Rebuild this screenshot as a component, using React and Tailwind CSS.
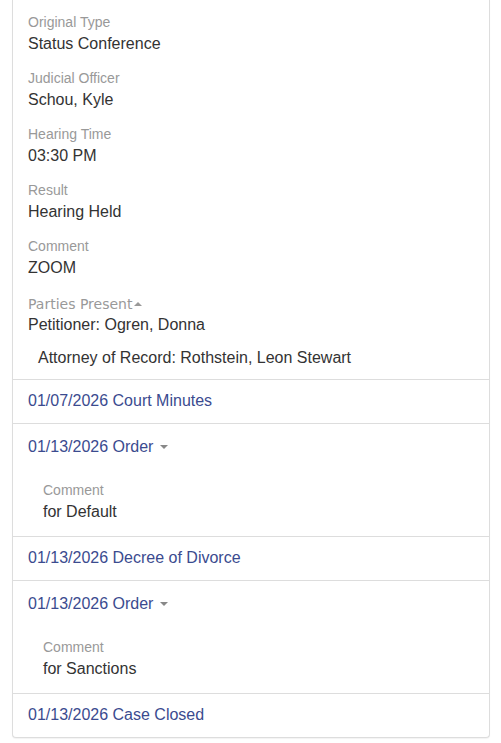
import React from "react";

const font = { fontFamily: '"Liberation Sans", Arial, sans-serif' };

function Field({ label, value }) {
  return (
    <div className="mb-[12px]">
      <div className="text-[14px] leading-[20px] text-[#999]">{label}</div>
      <div className="text-[16px] leading-[24px] text-[#333]">{value}</div>
    </div>
  );
}

function CaretDown() {
  return (
    <span className="inline-block ml-[7px] align-middle w-0 h-0 border-t-[4px] border-t-[#888] border-x-[4px] border-x-transparent relative -top-[1px]" />
  );
}

function CaretUp() {
  return (
    <span className="inline-block ml-[2px] align-middle w-0 h-0 border-b-[4px] border-b-[#999] border-x-[4px] border-x-transparent relative -top-[1px]" />
  );
}

function LinkRow({ text, last }) {
  return (
    <div
      className={
        "px-[15px] pt-[10px] pb-[11px] text-[16px] leading-[22px] text-[#3b4b8f] " +
        (last ? "" : "border-b border-[#ddd]")
      }
    >
      {text}
    </div>
  );
}

function OrderRow({ text, comment }) {
  return (
    <div className="px-[15px] pt-[12px] pb-[12px] border-b border-[#ddd]">
      <div className="text-[16px] leading-[22px] text-[#3b4b8f]">
        {text}
        <CaretDown />
      </div>
      <div className="pl-[15px] mt-[22px]">
        <div className="text-[14px] leading-[20px] text-[#999]">Comment</div>
        <div className="text-[16px] leading-[24px] text-[#333]">{comment}</div>
      </div>
    </div>
  );
}

export default function App() {
  return (
    <div className="bg-white w-[501px] min-h-[743px] pb-[7px]" style={font}>
      <div className="ml-[12px] mr-[11px] border-x border-b border-[#ddd] rounded-b-[4px] shadow-[0_1px_1px_rgba(0,0,0,0.05)] bg-white">
        <div className="border-b border-[#ddd] px-[15px] pt-[12px] pb-[10px]">
          <Field label="Original Type" value="Status Conference" />
          <Field label="Judicial Officer" value="Schou, Kyle" />
          <Field label="Hearing Time" value="03:30 PM" />
          <Field label="Result" value="Hearing Held" />
          <Field label="Comment" value="ZOOM" />
          <div
            className="pt-[2px] text-[14px] leading-[20px] text-[#999]"
            style={{ fontFamily: '"DejaVu Sans", Verdana, sans-serif' }}
          >
            Parties Present
            <CaretUp />
          </div>
          <div className="text-[16px] leading-[22px] text-[#333]">Petitioner: Ogren, Donna</div>
          <div className="pl-[10px] mt-[11px] text-[16px] leading-[22px] text-[#333]">
            Attorney of Record: Rothstein, Leon Stewart
          </div>
        </div>
        <LinkRow text="01/07/2026 Court Minutes" />
        <OrderRow text="01/13/2026 Order" comment="for Default" />
        <LinkRow text="01/13/2026 Decree of Divorce" />
        <OrderRow text="01/13/2026 Order" comment="for Sanctions" />
        <LinkRow text="01/13/2026 Case Closed" last />
      </div>
    </div>
  );
}
